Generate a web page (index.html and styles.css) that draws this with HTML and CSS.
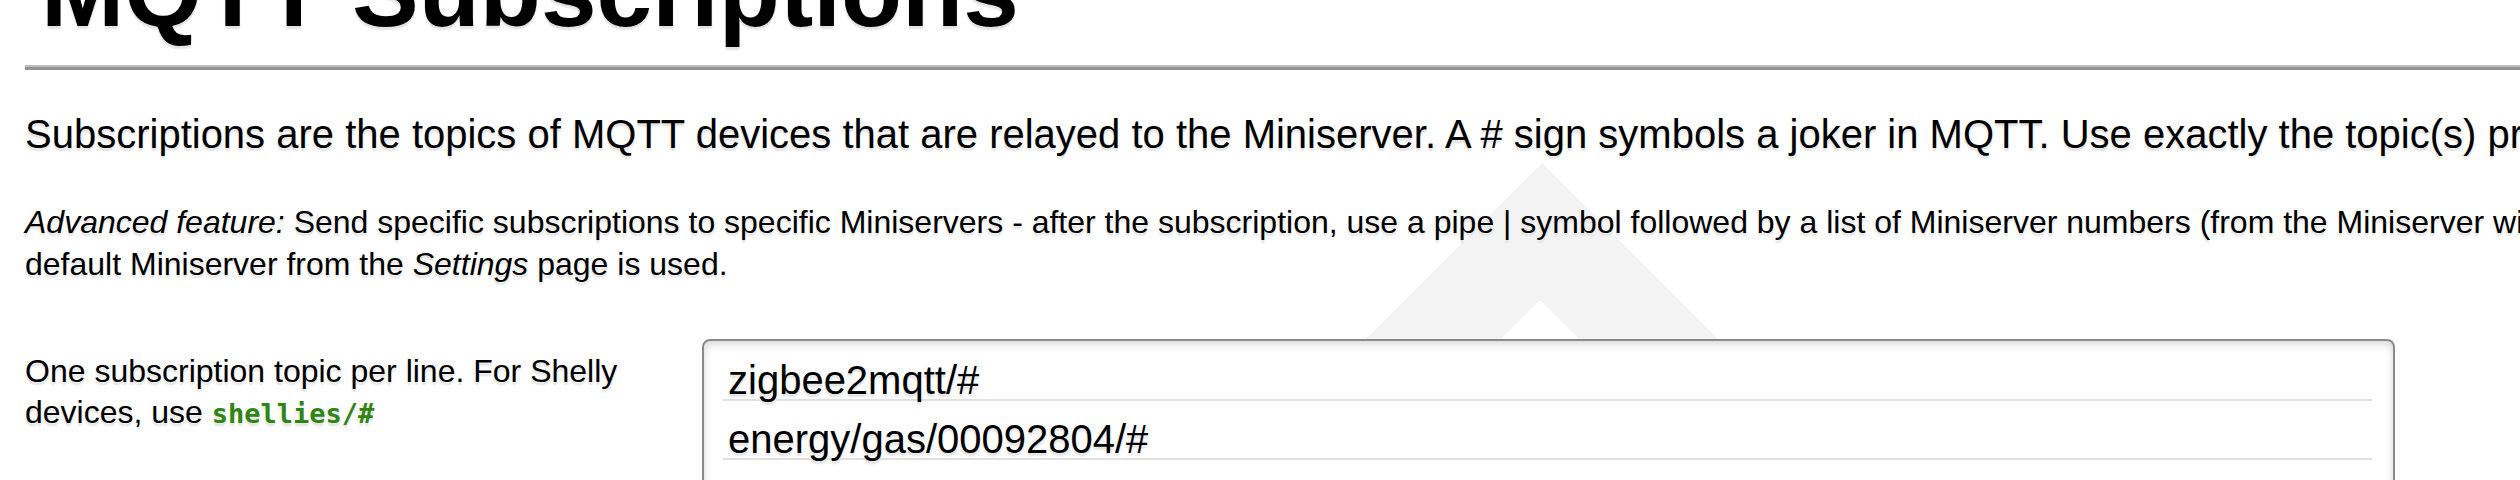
FILE: index.html
```html
<!DOCTYPE html>
<html lang="en">
<head>
    <meta charset="UTF-8">
    <title>MQTT Subscriptions</title>
    <link rel="stylesheet" href="styles.css">
</head>
<body>

    <div class="page">

        <!-- faint logo behind the form -->
        <svg class="watermark" width="2520" height="480" viewBox="0 0 2520 480" aria-hidden="true">
            <path d="M1542 163 L2000 621 L1084 621 Z M1540 300 L1080 760 L2000 760 Z" fill="#f3f3f3" fill-rule="evenodd"/>
        </svg>

        <h1 class="title">MQTT Subscriptions</h1>
        <div class="rule"></div>

        <p class="intro">Subscriptions are the topics of MQTT devices that are relayed to the Miniserver. A # sign symbols a joker in MQTT. Use exactly the topic(s) provided by your devices.</p>

        <p class="note"><i>Advanced feature:</i> Send specific subscriptions to specific Miniservers - after the subscription, use a pipe | symbol followed by a list of Miniserver numbers (from the Miniserver widget). Otherwise the<br>default Miniserver from the <i>Settings</i> page is used.</p>

        <div class="field">
            <label for="topics">One subscription topic per line. For Shelly devices, use <code>shellies/#</code></label>
            <div class="topics" id="topics">
                <div class="topic">zigbee2mqtt/#</div>
                <div class="topic">energy/gas/00092804/#</div>
                <div class="topic">shellies/#</div>
            </div>
        </div>

    </div>

</body>
</html>
```

FILE: styles.css
```css
body {
    margin: 0;
    background-color: #fff;
    color: #000;
    font-family: "Liberation Sans", Arial, sans-serif;
    overflow: hidden;
}

.page {
    position: relative;
    width: 3073px;
    margin-top: -59px;
    padding-left: 25px;
    text-shadow: 0 3px 2px #e2e2e2;
}

.watermark {
    position: absolute;
    left: 0;
    top: 59px;
    z-index: -1;
}

.title {
    margin: 0;
    padding-left: 16px;
    font-size: 100px;
    line-height: 100px;
    font-weight: bold;
}

.rule {
    margin-top: 24px;
    border-top: 2px solid #bdbdbd;
    border-bottom: 3px solid #949494;
}

.intro {
    margin: 38px 0 0;
    font-size: 40px;
    line-height: 52px;
}

.note {
    margin: 41px 0 0;
    font-size: 32px;
    line-height: 42px;
}

.field {
    display: grid;
    grid-template-columns: 677px 1693px;
    margin-top: 54px;
}

.field label {
    padding-top: 12px;
    font-size: 32px;
    line-height: 41px;
}

.field code {
    font-family: "DejaVu Sans Mono", "Liberation Mono", monospace;
    font-size: 27px;
    line-height: 1;
    font-weight: bold;
    color: #2f8512;
}

.topics {
    height: 320px;
    padding: 20px 21px 0 19px;
    border: 2px solid #8a8a8a;
    border-radius: 8px;
    background-color: #fff;
    box-shadow: inset 0 3px 9px rgba(0, 0, 0, 0.16);
    font-size: 40px;
}

.topic {
    padding-left: 5px;
    line-height: 38px;
    border-bottom: 2px solid #e0e0e0;
    margin-bottom: 19px;
}
```
